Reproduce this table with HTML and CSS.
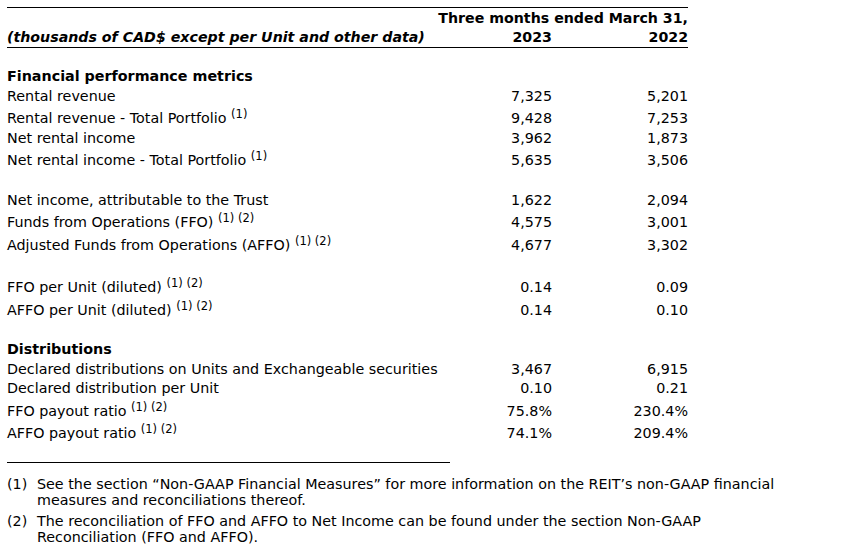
FILE: index.html
```html
<!DOCTYPE html>
<html>
<head>
<meta charset="utf-8">
<link rel="stylesheet" href="styles.css">
</head>
<body>
<table class="fin">
  <colgroup>
    <col class="c-label">
    <col class="c-num">
    <col class="c-num2">
  </colgroup>
  <thead>
    <tr class="h1">
      <th></th>
      <th colspan="2" class="r">Three months ended March 31,</th>
    </tr>
    <tr class="h2">
      <th class="l units">(thousands of CAD$ except per Unit and other data)</th>
      <th class="r">2023</th>
      <th class="r">2022</th>
    </tr>
  </thead>
  <tbody>
    <tr class="gap"><td colspan="3"></td></tr>
    <tr class="sec"><td>Financial performance metrics</td><td></td><td></td></tr>
    <tr><td>Rental revenue</td><td class="n">7,325</td><td class="n">5,201</td></tr>
    <tr class="s"><td>Rental revenue - Total Portfolio <sup>(1)</sup></td><td class="n">9,428</td><td class="n">7,253</td></tr>
    <tr><td>Net rental income</td><td class="n">3,962</td><td class="n">1,873</td></tr>
    <tr class="s"><td>Net rental income - Total Portfolio <sup>(1)</sup></td><td class="n">5,635</td><td class="n">3,506</td></tr>
    <tr class="blank"><td colspan="3"></td></tr>
    <tr><td>Net income, attributable to the Trust</td><td class="n">1,622</td><td class="n">2,094</td></tr>
    <tr class="s"><td>Funds from Operations (FFO) <sup>(1) (2)</sup></td><td class="n">4,575</td><td class="n">3,001</td></tr>
    <tr class="s"><td>Adjusted Funds from Operations (AFFO) <sup>(1) (2)</sup></td><td class="n">4,677</td><td class="n">3,302</td></tr>
    <tr class="blank"><td colspan="3"></td></tr>
    <tr class="s"><td>FFO per Unit (diluted) <sup>(1) (2)</sup></td><td class="n">0.14</td><td class="n">0.09</td></tr>
    <tr class="s"><td>AFFO per Unit (diluted) <sup>(1) (2)</sup></td><td class="n">0.14</td><td class="n">0.10</td></tr>
    <tr class="blank"><td colspan="3"></td></tr>
    <tr class="sec"><td>Distributions</td><td></td><td></td></tr>
    <tr><td>Declared distributions on Units and Exchangeable securities</td><td class="n">3,467</td><td class="n">6,915</td></tr>
    <tr><td>Declared distribution per Unit</td><td class="n">0.10</td><td class="n">0.21</td></tr>
    <tr class="s"><td>FFO payout ratio <sup>(1) (2)</sup></td><td class="n">75.8%</td><td class="n">230.4%</td></tr>
    <tr class="s"><td>AFFO payout ratio <sup>(1) (2)</sup></td><td class="n">74.1%</td><td class="n">209.4%</td></tr>
  </tbody>
</table>

<div class="notes">
  <div class="rule"></div>
  <div class="note"><span class="mark">(1)</span><span class="txt">See the section “Non-GAAP Financial Measures” for more information on the REIT’s non-GAAP financial measures and reconciliations thereof.</span></div>
  <div class="note"><span class="mark">(2)</span><span class="txt">The reconciliation of FFO and AFFO to Net Income can be found under the section Non-GAAP Reconciliation (FFO and AFFO).</span></div>
</div>
</body>
</html>
```

FILE: styles.css
```css
html, body {
  margin: 0;
  padding: 0;
  background: #fff;
}
body {
  padding: 7px 7px 0 7px;
  color: #000;
  font-family: "DejaVu Sans", Verdana, sans-serif;
  font-size: 14.3px;
}
.fin {
  border-collapse: collapse;
  width: 681px;
  table-layout: fixed;
}
.c-label { width: 425px; }
.c-num { width: 120px; }
.c-num2 { width: 136px; }

.fin th {
  font-weight: bold;
  font-size: 14.2px;
  line-height: 19px;
  padding: 0;
  white-space: nowrap;
}
.fin thead tr.h1 th { border-top: 1px solid #000; padding-top: 1px; }
.fin thead tr.h2 th { border-bottom: 1px solid #000; }
.fin th.r { text-align: right; }
.fin th.l { text-align: left; }
.fin th.units { font-style: italic; }

.fin td {
  padding: 2px 0;
  line-height: 15.5px;
  white-space: nowrap;
  vertical-align: bottom;
}
.fin tr.s td { padding-top: 5px; }
.fin td.n { text-align: right; }
.fin tr.gap td { height: 19px; padding: 0; }
.fin tr.blank td { height: 20px; padding: 0; }
.fin tr.sec td { font-weight: bold; }

sup {
  font-size: 11.5px;
  vertical-align: 5px;
  line-height: 0;
}

.notes {
  margin-top: 18px;
  line-height: 16.5px;
}
.rule {
  width: 443px;
  border-top: 1px solid #000;
  margin-bottom: 13px;
}
.note {
  display: flex;
  width: 775px;
  margin-bottom: 4px;
}
.mark {
  width: 30px;
  flex: none;
}
.txt { flex: 1; }
```
